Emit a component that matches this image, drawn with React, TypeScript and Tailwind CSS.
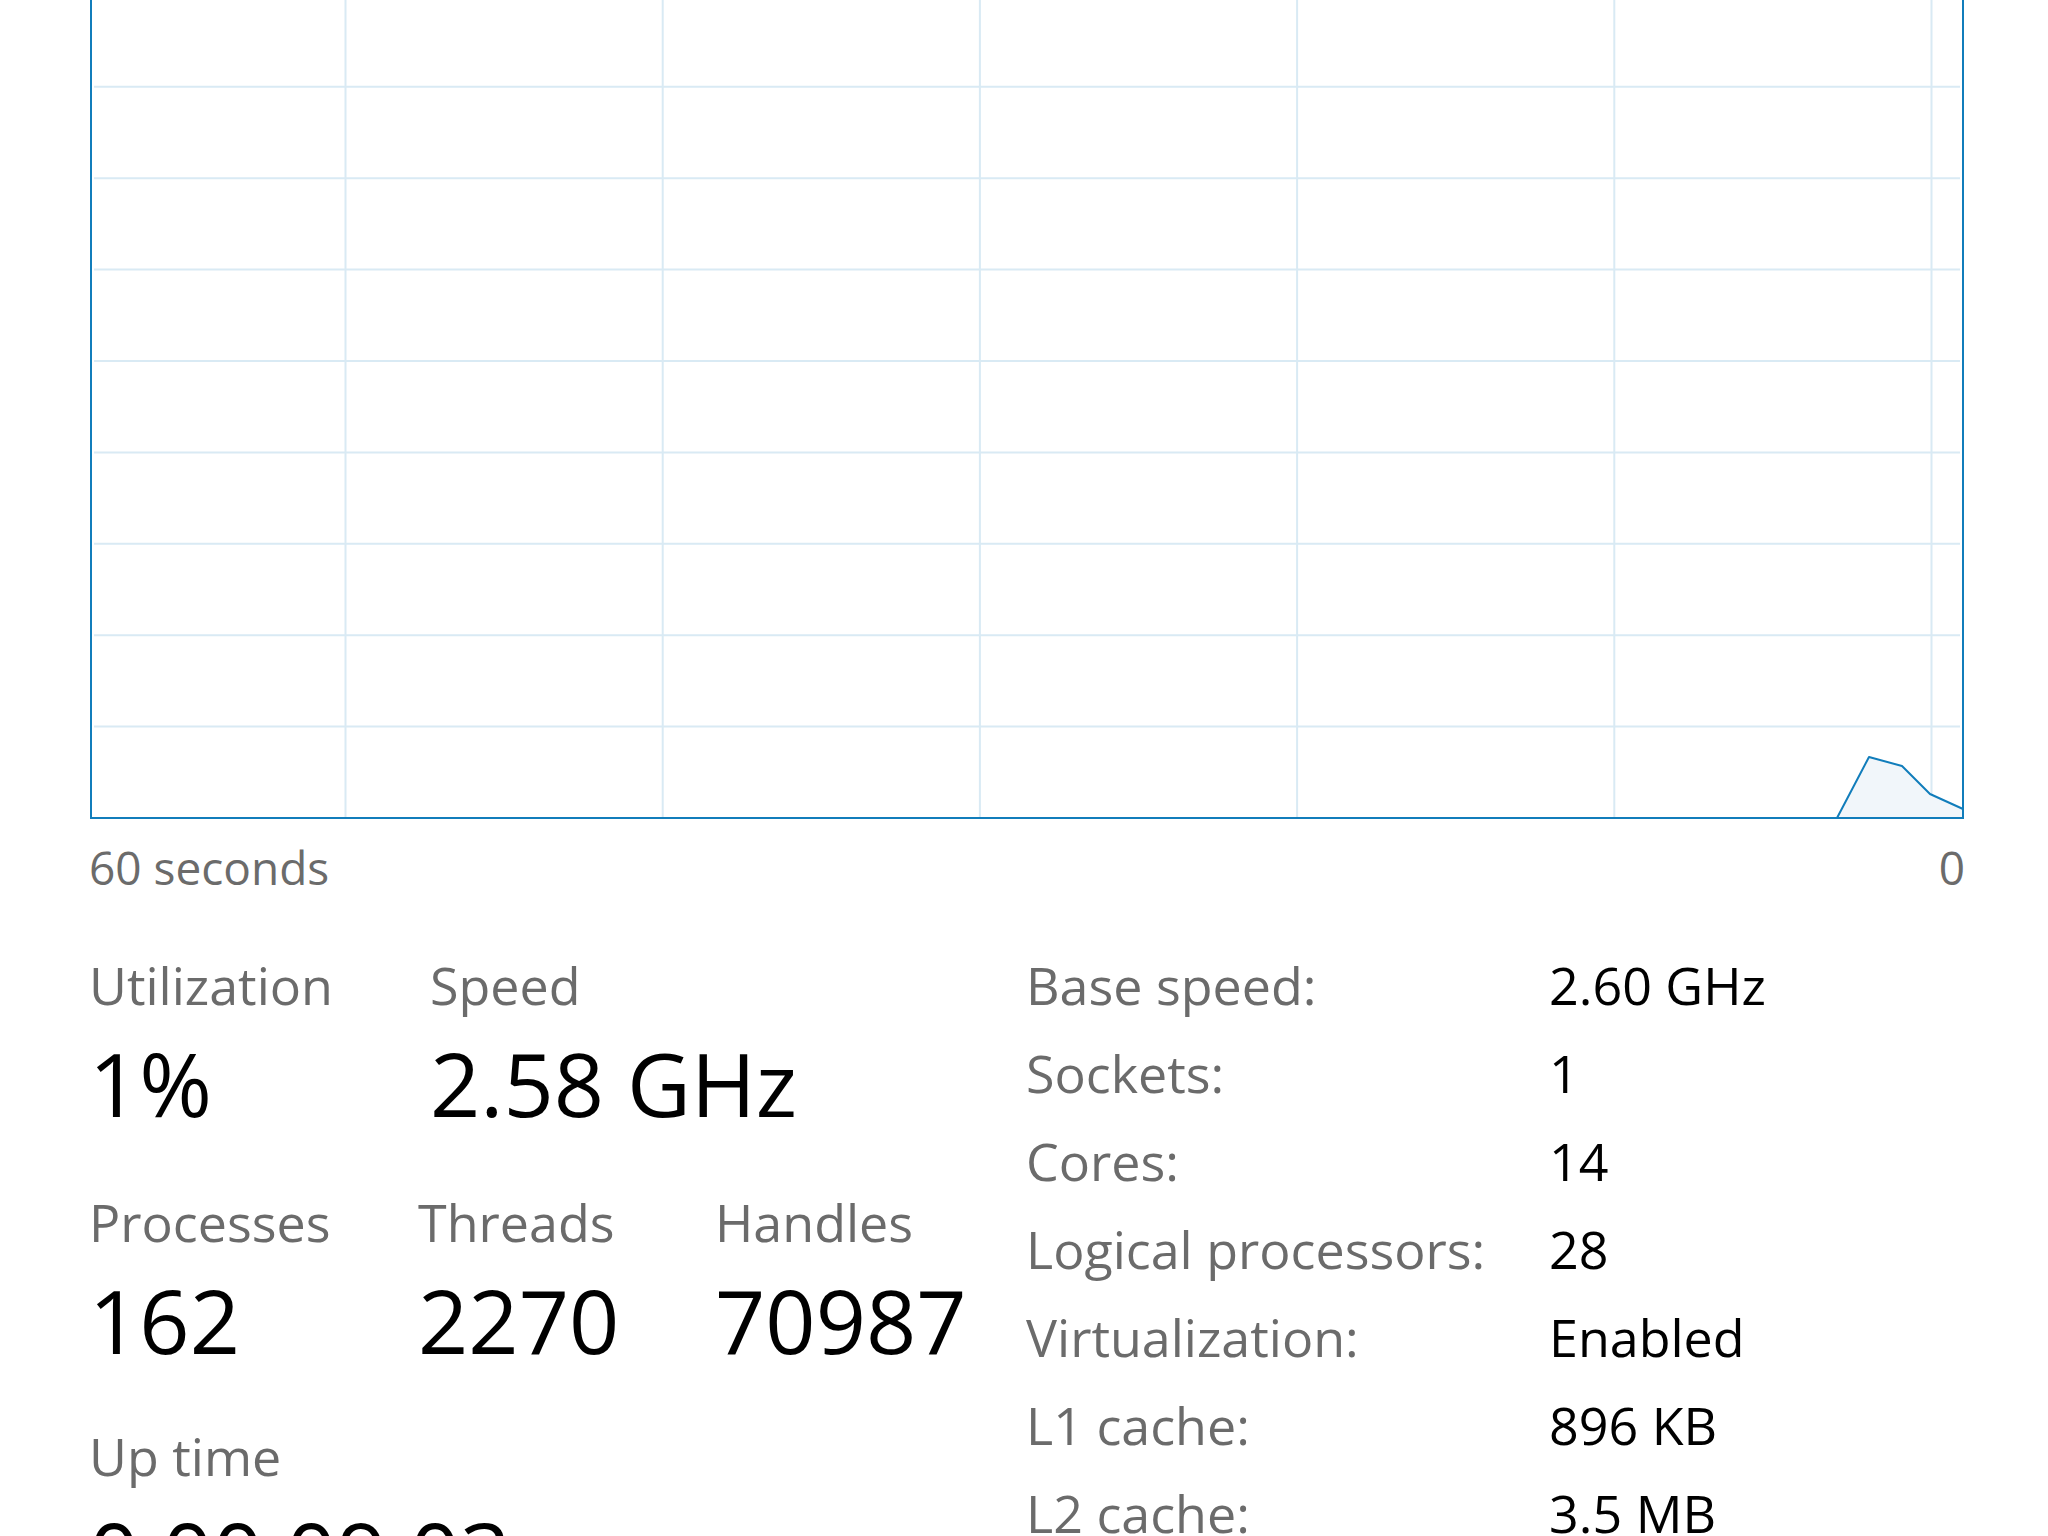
import React from "react";

const H_LINES = [1, 2, 3, 4, 5, 6, 7, 8, 9].map((k) => 823 - 91.4 * k);
const V_LINES = [0, 1, 2, 3, 4, 5].map((k) => 255.5 + 317.2 * k);

function Chart() {
  return (
    <div className="ml-[90px] mt-[-5px] h-[824px] w-[1874px]">
      <svg width="1874" height="824" viewBox="0 0 1874 824" className="block">
        <rect x="0" y="0" width="1874" height="824" fill="#ffffff" />
        {H_LINES.map((y, i) => (
          <line key={"h" + i} x1="4" x2="1870" y1={y} y2={y} stroke="#d9eaf4" strokeWidth="2" />
        ))}
        {V_LINES.map((x, i) => (
          <line key={"v" + i} x1={x} x2={x} y1="0" y2="822" stroke="#d9eaf4" strokeWidth="2" />
        ))}
        <polygon
          points="1747,823 1779,762 1812,771 1840,799 1873,814 1873,823"
          fill="#f1f6fa"
        />
        <polyline
          points="1747,823 1779,762 1812,771 1840,799 1873,814"
          fill="none"
          stroke="#117dbb"
          strokeWidth="2"
          strokeLinejoin="round"
        />
        <rect x="1" y="-10" width="1872" height="833" fill="none" stroke="#117dbb" strokeWidth="2" />
      </svg>
    </div>
  );
}

function Stat({ label, value, className }: { label: string; value: string; className?: string }) {
  return (
    <div className={className}>
      <div className="h-[60px] text-[52px] leading-[60px] text-[#6b6b6b] whitespace-nowrap">{label}</div>
      <div className="mt-[23px] h-[90px] text-[88px] leading-[90px] text-black whitespace-nowrap">{value}</div>
    </div>
  );
}

const DETAILS: [string, string][] = [
  ["Base speed:", "2.60 GHz"],
  ["Sockets:", "1"],
  ["Cores:", "14"],
  ["Logical processors:", "28"],
  ["Virtualization:", "Enabled"],
  ["L1 cache:", "896 KB"],
  ["L2 cache:", "3.5 MB"],
];

export default function App() {
  return (
    <div className="w-[2048px] h-[1536px] overflow-hidden bg-white font-['Open_Sans',sans-serif]">
      <Chart />
      <div className="ml-[89px] mt-[18px] flex h-[61px] w-[1876px] justify-between text-[46px] leading-[61px] text-[#6b6b6b]">
        <span>60 seconds</span>
        <span>0</span>
      </div>
      <div className="ml-[89px] mt-[43px] flex">
        <div className="w-[937px] pt-[14px]">
          <div className="flex">
            <Stat className="w-[341px]" label="Utilization" value="1%" />
            <Stat label="Speed" value="2.58 GHz" />
          </div>
          <div className="mt-[64px] flex">
            <Stat className="w-[329px]" label="Processes" value="162" />
            <Stat className="w-[297px]" label="Threads" value="2270" />
            <Stat label="Handles" value="70987" />
          </div>
          <div className="mt-[61px]">
            <div className="h-[60px] text-[52px] leading-[60px] text-[#6b6b6b]">Up time</div>
            <div className="mt-[22px] h-[90px] text-[88px] leading-[90px] text-black whitespace-nowrap">0:00:09:03</div>
          </div>
        </div>
        <div className="flex flex-col">
          {DETAILS.map(([k, v]) => (
            <div key={k} className="flex h-[88px] text-[52px] leading-[88px]">
              <div className="w-[523px] text-[#6b6b6b] whitespace-nowrap">{k}</div>
              <div className="text-black whitespace-nowrap">{v}</div>
            </div>
          ))}
        </div>
      </div>
    </div>
  );
}
